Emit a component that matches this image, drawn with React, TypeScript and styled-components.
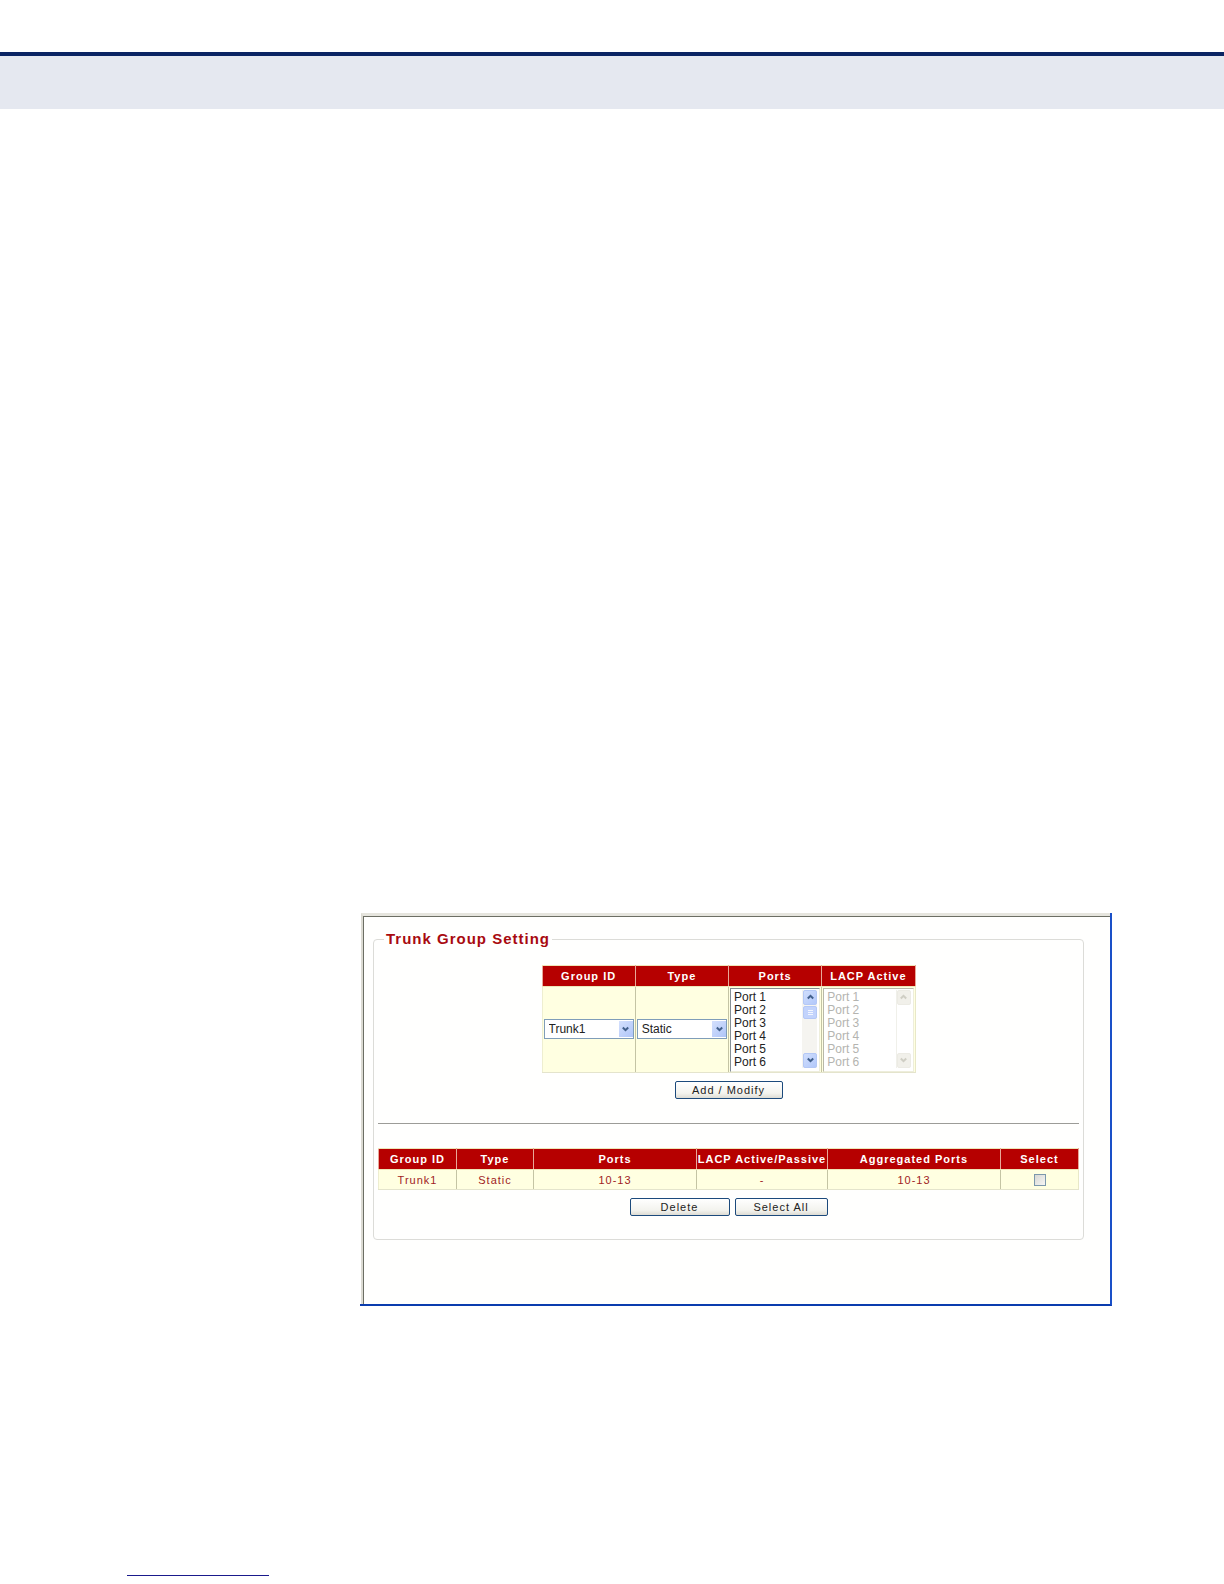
import React, { useRef, useState } from "react";
import styled, { createGlobalStyle } from "styled-components";

const GlobalStyle = createGlobalStyle`
  *, *::before, *::after { box-sizing: border-box; }
  body {
    margin: 0;
    background: #ffffff;
    font-family: Arial, "Liberation Sans", sans-serif;
  }
`;

const Page = styled.div`
  display: flex;
  flex-direction: column;
  min-height: 100vh;
  padding-top: 52px;
`;

const Banner = styled.header`
  height: 57px;
  border-top: 4px solid #0a2463;
  background: #e5e8f0;
`;

const Main = styled.main`
  padding: 804px 112px 0 360px;
`;

const Window = styled.section`
  padding: 0 0 0 1px;
  border-right: 2px solid #1a50c8;
  border-bottom: 2px solid #0a3cae;
`;

const Frame = styled.div`
  border-top: 3px solid #e6e5de;
  border-left: 2px solid #dcdbd3;
`;

const FrameBody = styled.div`
  padding: 13px 26px 64px 9px;
  border-top: 1px solid #6c6e64;
  border-left: 1px solid #6c6e64;
  background: #fffffe;
`;

const Group = styled.fieldset`
  display: block;
  min-width: 0;
  margin: 0;
  padding: 17px 4px 23px;
  border: 1px solid #dcdcd8;
  border-radius: 4px;
`;

const Title = styled.legend`
  margin-left: 6px;
  padding: 0 2px;
  color: #a80a10;
  font-size: 15px;
  font-weight: bold;
  line-height: 18px;
  letter-spacing: 1px;
`;

const Table = styled.table<{ $fill?: boolean }>`
  width: ${(p) => (p.$fill ? "100%" : "374px")};
  margin: 0 auto;
  border-collapse: collapse;
  table-layout: fixed;
`;

const Head = styled.th`
  height: 21px;
  padding: 0;
  border: 1px solid #eee6b8;
  border-left-color: #e8a898;
  border-right-color: #e8a898;
  background: #b60000;
  color: #ffffff;
  font-size: 11px;
  font-weight: bold;
  line-height: 14px;
  letter-spacing: 1px;
  text-align: center;
  white-space: nowrap;
`;

const Cell = styled.td<{ $tall?: boolean }>`
  height: ${(p) => (p.$tall ? 86 : 20)}px;
  padding: 0 1px;
  border: 1px solid #c4c4a4;
  border-bottom-color: #e4e4cc;
  background: #ffffe1;
  color: #a01c24;
  font-size: 11px;
  line-height: 14px;
  letter-spacing: 1px;
  text-align: center;
  vertical-align: middle;

  &:first-child { border-left-color: #eeeed0; }
  &:last-child { border-right-color: #e8e8c8; }
`;

const Picker = styled.div`
  display: grid;
  align-items: center;
  height: 20px;
  margin-bottom: 2px;
  border: 1px solid #7f9db9;
  background: #ffffff;
`;

const PickerSelect = styled.select`
  grid-area: 1 / 1;
  width: 100%;
  height: 18px;
  padding: 0 16px 0 4px;
  border: 0;
  background: transparent;
  appearance: none;
  color: #222222;
  font: 12px/16px Arial, "Liberation Sans", sans-serif;
`;

const PickerArrow = styled.span`
  grid-area: 1 / 1;
  justify-self: end;
  display: flex;
  align-items: center;
  justify-content: center;
  width: 14px;
  height: 16px;
  background: linear-gradient(135deg, #d4e0fd, #afc5f8);
  pointer-events: none;
`;

const ListBox = styled.div<{ $off?: boolean }>`
  display: flex;
  height: 84px;
  padding: 1px 2px 3px 0;
  border: 1px solid ${(p) => (p.$off ? "#b8b8a8" : "#848e94")};
  border-right-color: #eeeedc;
  border-bottom-color: #eeeedc;
  background: #ffffff;
`;

const ListSelect = styled.select`
  flex: 1;
  min-width: 0;
  height: 78px;
  padding: 0;
  border: 0;
  outline: 0;
  background: transparent;
  color: #222222;
  font: 12px/13px Arial, "Liberation Sans", sans-serif;
  overflow: auto;
  scrollbar-width: none;

  &:disabled { color: #b4b4b0; opacity: 1; }

  option {
    height: 13px;
    min-height: 13px;
    padding: 0 0 0 3px;
    line-height: 13px;
  }

  option:disabled, &:disabled option { color: #b4b4b0; }
`;

const ScrollBar = styled.div<{ $off?: boolean }>`
  display: flex;
  flex-direction: column;
  justify-content: space-between;
  width: 15px;
  background: ${(p) => (p.$off ? "#ffffff" : "#f5f4f0")};
  border-left: 1px solid ${(p) => (p.$off ? "#f0f0ea" : "#f5f4f0")};
`;

const ScrollButton = styled.button`
  display: flex;
  align-items: center;
  justify-content: center;
  width: 14px;
  height: 15px;
  padding: 0;
  border: 1px solid #b4c8f6;
  border-radius: 2px;
  background: linear-gradient(135deg, #d0defd, #b2c8fa);

  &:disabled {
    border-color: #ecebe4;
    background: #f1f0ea;
  }
`;

const Thumb = styled.span`
  display: flex;
  flex-direction: column;
  align-items: center;
  justify-content: center;
  gap: 1px;
  width: 14px;
  height: 13px;
  margin: 1px 0 auto;
  border: 1px solid #b4c8f6;
  border-radius: 2px;
  background: #c2d3fc;
`;

const Grip = styled.span`
  width: 5px;
  height: 1px;
  background: #f2f6ff;
`;

const Actions = styled.div`
  display: flex;
  justify-content: center;
  gap: 5px;
  margin-top: 8px;
`;

const Button = styled.button<{ $width: number }>`
  width: ${(p) => p.$width}px;
  height: 18px;
  padding: 0;
  border: 1px solid #1c4a7c;
  border-radius: 2px;
  background: linear-gradient(#ffffff, #f3f3ee 70%, #dddcd4);
  color: #222222;
  font: 11px/14px Arial, "Liberation Sans", sans-serif;
  letter-spacing: 1px;
`;

const Divider = styled.hr`
  height: 1px;
  margin: 24px 0;
  border: 0;
  background: #9c9c98;
`;

const Tick = styled.input`
  display: block;
  width: 12px;
  height: 12px;
  margin: 0 auto;
  border: 1px solid #7c98ac;
  background: linear-gradient(135deg, #d8d8d4, #f6f6f4);
  appearance: none;

  &:checked { background: #21a121; }
`;

const Footer = styled.footer`
  margin-top: auto;
  padding: 0 127px 8px;
`;

const FooterRule = styled.div`
  width: 142px;
  height: 1px;
  background: #1a1a8c;
`;

type ChevronProps = { up?: boolean; color?: string };

function Chevron({ up, color = "#42608c" }: ChevronProps) {
  return (
    <svg width="7" height="6" viewBox="0 0 7 6" aria-hidden="true">
      <path
        d={up ? "M.8 4.5 3.5 1.8 6.2 4.5" : "M.8 1.5 3.5 4.2 6.2 1.5"}
        fill="none"
        stroke={color}
        strokeWidth="2"
      />
    </svg>
  );
}

function DropDown({ label, options }: { label: string; options: string[] }) {
  return (
    <Picker>
      <PickerSelect aria-label={label}>
        {options.map((option) => (
          <option key={option}>{option}</option>
        ))}
      </PickerSelect>
      <PickerArrow>
        <Chevron />
      </PickerArrow>
    </Picker>
  );
}

const ports = Array.from({ length: 28 }, (_, i) => `Port ${i + 1}`);

function PortList({ label, disabled }: { label: string; disabled?: boolean }) {
  const list = useRef<HTMLSelectElement>(null);
  const scroll = (step: number) => list.current?.scrollBy(0, step);
  const arrow = disabled ? "#cfcec4" : undefined;
  return (
    <ListBox $off={disabled}>
      <ListSelect ref={list} multiple size={6} disabled={disabled} aria-label={label}>
        {(disabled ? ports.slice(0, 6) : ports).map((port) => (
          <option key={port}>{port}</option>
        ))}
      </ListSelect>
      <ScrollBar $off={disabled}>
        <ScrollButton type="button" disabled={disabled} aria-label={`${label} up`} onClick={() => scroll(-13)}>
          <Chevron up color={arrow} />
        </ScrollButton>
        {!disabled && (
          <Thumb>
            <Grip />
            <Grip />
            <Grip />
          </Thumb>
        )}
        <ScrollButton type="button" disabled={disabled} aria-label={`${label} down`} onClick={() => scroll(13)}>
          <Chevron color={arrow} />
        </ScrollButton>
      </ScrollBar>
    </ListBox>
  );
}

export default function App() {
  const [selected, setSelected] = useState(false);
  return (
    <Page>
      <GlobalStyle />
      <Banner />
      <Main>
        <Window>
          <Frame>
            <FrameBody>
              <Group>
                <Title>Trunk Group Setting</Title>
                <Table>
                  <thead>
                    <tr>
                      <Head>Group ID</Head>
                      <Head>Type</Head>
                      <Head>Ports</Head>
                      <Head>LACP Active</Head>
                    </tr>
                  </thead>
                  <tbody>
                    <tr>
                      <Cell $tall>
                        <DropDown label="Group ID" options={["Trunk1", "Trunk2", "Trunk3"]} />
                      </Cell>
                      <Cell $tall>
                        <DropDown label="Type" options={["Static", "LACP"]} />
                      </Cell>
                      <Cell $tall>
                        <PortList label="Ports" />
                      </Cell>
                      <Cell $tall>
                        <PortList label="LACP Active" disabled />
                      </Cell>
                    </tr>
                  </tbody>
                </Table>
                <Actions>
                  <Button type="button" $width={108}>Add / Modify</Button>
                </Actions>
                <Divider />
                <Table $fill>
                  <colgroup>
                    <col width="78" />
                    <col width="77" />
                    <col width="163" />
                    <col width="131" />
                    <col width="173" />
                    <col width="78" />
                  </colgroup>
                  <thead>
                    <tr>
                      <Head>Group ID</Head>
                      <Head>Type</Head>
                      <Head>Ports</Head>
                      <Head>LACP Active/Passive</Head>
                      <Head>Aggregated Ports</Head>
                      <Head>Select</Head>
                    </tr>
                  </thead>
                  <tbody>
                    <tr>
                      <Cell>Trunk1</Cell>
                      <Cell>Static</Cell>
                      <Cell>10-13</Cell>
                      <Cell>-</Cell>
                      <Cell>10-13</Cell>
                      <Cell>
                        <Tick
                          type="checkbox"
                          aria-label="Select Trunk1"
                          checked={selected}
                          onChange={(e) => setSelected(e.target.checked)}
                        />
                      </Cell>
                    </tr>
                  </tbody>
                </Table>
                <Actions>
                  <Button type="button" $width={100}>Delete</Button>
                  <Button type="button" $width={93} onClick={() => setSelected(true)}>Select All</Button>
                </Actions>
              </Group>
            </FrameBody>
          </Frame>
        </Window>
      </Main>
      <Footer>
        <FooterRule />
      </Footer>
    </Page>
  );
}
